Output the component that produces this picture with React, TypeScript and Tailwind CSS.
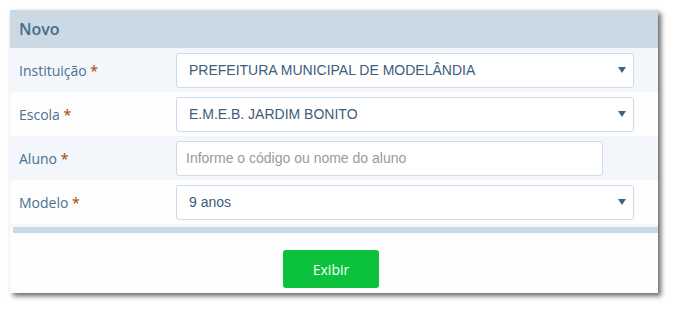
import { ChangeEvent, useState } from "react";

const labelFont = { fontFamily: '"Open Sans", "Noto Sans", sans-serif' };

function Caret() {
  return (
    <svg width="8" height="6" viewBox="0 0 8 6" className="absolute right-[7px] top-1/2 -translate-y-1/2">
      <path d="M0 0h8L4 6z" fill="#3f6382" />
    </svg>
  );
}

function Row({
  label,
  shaded,
  children,
}: {
  label: string;
  shaded?: boolean;
  children: React.ReactNode;
}) {
  return (
    <div
      className={`flex h-[44px] items-center ${shaded ? "bg-[#f3f7fb]" : "bg-[#fdfdfe]"}`}
    >
      <label
        className="w-[166px] shrink-0 pl-[9px] text-[14px] text-[#4b7090]"
        style={labelFont}
      >
        {label} <span className="font-semibold text-[#b8562b]">*</span>
      </label>
      {children}
    </div>
  );
}

function SelectBox({ value }: { value: string }) {
  return (
    <div className="relative flex h-[35px] w-[458px] items-center rounded-[3px] border border-[#cfdbe6] bg-white pl-[12px] font-['Liberation_Sans',Arial,sans-serif] text-[14px] text-[#3c5d7c]">
      {value}
      <Caret />
    </div>
  );
}

export default function App() {
  const [aluno, setAluno] = useState("");

  return (
    <div className="min-h-[310px] bg-white pl-[10px] pt-[10px]">
      <div className="w-[648px] bg-[#fdfdfe] shadow-[3px_3px_5px_rgba(0,0,0,0.6)]">
        <div className="flex h-[38px] items-center bg-[#cad9e4] pl-[9px]">
          <h2 className="text-[16px] font-semibold text-[#466c8c]" style={labelFont}>
            Novo
          </h2>
        </div>

        <Row label="Instituição" shaded>
          <SelectBox value="PREFEITURA MUNICIPAL DE MODELÂNDIA" />
        </Row>
        <Row label="Escola">
          <SelectBox value="E.M.E.B. JARDIM BONITO" />
        </Row>
        <Row label="Aluno" shaded>
          <input
            value={aluno}
            onChange={(e: ChangeEvent<HTMLInputElement>) => setAluno(e.target.value)}
            placeholder="Informe o código ou nome do aluno"
            className="h-[35px] w-[427px] rounded-[3px] border border-[#cfdbe6] bg-white pl-[9px] font-['Liberation_Sans',Arial,sans-serif] text-[14px] text-[#3c5d7c] outline-none placeholder:text-[#9a9a9a]"
          />
        </Row>
        <Row label="Modelo">
          <SelectBox value="9 anos" />
        </Row>

        <div className="h-[3px] bg-[#f3f7fb]" />
        <div className="ml-[3px] h-[6px] bg-[#cad9e4]" />

        <div className="flex justify-center pb-[5px] pr-[6px] pt-[17px]">
          <button
            type="button"
            className="h-[38px] w-[96px] rounded-[3px] bg-[#0cc23c] text-[14px] text-white"
            style={labelFont}
          >
            Exibir
          </button>
        </div>
      </div>
    </div>
  );
}
